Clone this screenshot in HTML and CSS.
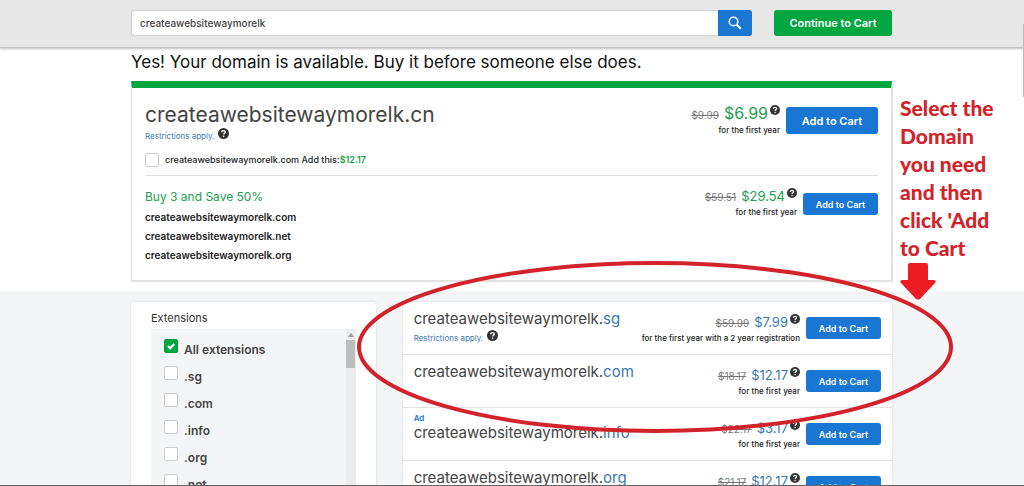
FILE: index.html
```html
<!DOCTYPE html>
<html lang="en">
<head>
    <meta charset="UTF-8">
    <meta name="viewport" content="width=device-width, initial-scale=1.0">
    <title>Domain Search</title>
    <link rel="stylesheet" href="styles.css">
</head>
<body>
    <svg class="sprite" aria-hidden="true">
        <symbol id="help" viewBox="0 0 12 12">
            <circle cx="6" cy="6" r="6" fill="#333"/>
            <path d="M4.1 4.7C4.1 3.5 4.9 2.8 6 2.8s1.9.7 1.9 1.7C7.9 5.7 6.1 5.8 6.1 7.2" fill="none" stroke="#fff" stroke-width="1.5"/>
            <circle cx="6.1" cy="9" r=".9" fill="#fff"/>
        </symbol>
    </svg>

    <header class="topbar">
        <form class="search">
            <input type="text" value="createawebsitewaymorelk" aria-label="Domain name">
            <button type="button" aria-label="Search">
                <svg width="14" height="14" viewBox="0 0 14 14" fill="none" stroke="#fff">
                    <circle cx="5.5" cy="5.5" r="4.3" stroke-width="1.5"/>
                    <path d="M8.8 8.8l4 4" stroke-width="2"/>
                </svg>
            </button>
        </form>
        <button type="button" class="continue">Continue to Cart</button>
    </header>

    <main>
        <section class="available">
            <h1>Yes! Your domain is available. Buy it before someone else does.</h1>
            <div class="card">
                <div class="offer main-offer">
                    <div class="info">
                        <h2>createawebsitewaymorelk.cn</h2>
                        <div class="restrict"><a href="#">Restrictions apply.</a><svg class="help"><use href="#help"/></svg></div>
                        <label class="addon">
                            <input type="checkbox">
                            <span>createawebsitewaymorelk.com Add this:<b>$12.17</b></span>
                        </label>
                    </div>
                    <div class="price">
                        <div class="amount"><s>$9.99</s><strong>$6.99</strong><svg class="help"><use href="#help"/></svg></div>
                        <div class="term">for the first year</div>
                    </div>
                    <button type="button" class="add big">Add to Cart</button>
                </div>
                <div class="offer bundle">
                    <div class="info">
                        <h3>Buy 3 and Save 50%</h3>
                        <ul>
                            <li>createawebsitewaymorelk.com</li>
                            <li>createawebsitewaymorelk.net</li>
                            <li>createawebsitewaymorelk.org</li>
                        </ul>
                    </div>
                    <div class="price">
                        <div class="amount"><s>$59.51</s><strong>$29.54</strong><svg class="help"><use href="#help"/></svg></div>
                        <div class="term">for the first year</div>
                    </div>
                    <button type="button" class="add">Add to Cart</button>
                </div>
            </div>
        </section>

        <section class="more">
            <aside class="filters">
                <h4>Extensions</h4>
                <div class="ext-box">
                    <div class="ext-list">
                        <label><input type="checkbox" checked><span>All extensions</span></label>
                        <label><input type="checkbox"><span>.sg</span></label>
                        <label><input type="checkbox"><span>.com</span></label>
                        <label><input type="checkbox"><span>.info</span></label>
                        <label><input type="checkbox"><span>.org</span></label>
                        <label><input type="checkbox"><span>.net</span></label>
                    </div>
                    <div class="track">
                        <svg width="6" height="4" viewBox="0 0 6 4"><path d="M3 0l3 4H0z" fill="#999"/></svg>
                        <div class="thumb"></div>
                    </div>
                </div>
            </aside>

            <div class="results">
                <div class="row">
                    <div class="info">
                        <div class="name">createawebsitewaymorelk.<em>sg</em></div>
                        <div class="restrict"><a href="#">Restrictions apply.</a><svg class="help"><use href="#help"/></svg></div>
                    </div>
                    <div class="price">
                        <div class="amount"><s>$59.99</s><strong>$7.99</strong><svg class="help"><use href="#help"/></svg></div>
                        <div class="term">for the first year with a 2 year registration</div>
                    </div>
                    <button type="button" class="add">Add to Cart</button>
                </div>
                <div class="row">
                    <div class="info">
                        <div class="name">createawebsitewaymorelk.<em>com</em></div>
                    </div>
                    <div class="price">
                        <div class="amount"><s>$18.17</s><strong>$12.17</strong><svg class="help"><use href="#help"/></svg></div>
                        <div class="term">for the first year</div>
                    </div>
                    <button type="button" class="add">Add to Cart</button>
                </div>
                <div class="row">
                    <div class="info">
                        <div class="ad">Ad</div>
                        <div class="name">createawebsitewaymorelk.<em>info</em></div>
                    </div>
                    <div class="price">
                        <div class="amount"><s>$22.17</s><strong>$3.17</strong><svg class="help"><use href="#help"/></svg></div>
                        <div class="term">for the first year</div>
                    </div>
                    <button type="button" class="add">Add to Cart</button>
                </div>
                <div class="row">
                    <div class="info">
                        <div class="name">createawebsitewaymorelk.<em>org</em></div>
                    </div>
                    <div class="price">
                        <div class="amount"><s>$21.17</s><strong>$12.17</strong><svg class="help"><use href="#help"/></svg></div>
                        <div class="term">for the first year</div>
                    </div>
                    <button type="button" class="add">Add to Cart</button>
                </div>
            </div>
        </section>
    </main>

    <!-- callout drawn over the page -->
    <svg class="ring" viewBox="0 0 600 174" fill="none">
        <ellipse cx="300" cy="87" rx="296" ry="84" stroke="#d2232a" stroke-width="4"/>
    </svg>
    <div class="note">
        <p>Select the Domain you need and then click 'Add to Cart</p>
        <svg width="36" height="38" viewBox="0 0 36 38">
            <path d="M10 1h16q2 0 2 2v15h6q3 1 1 3L20 37q-2 1-4 0L1 21q-2-2 1-3h6V3q0-2 2-2z" fill="#ed1c24"/>
        </svg>
    </div>
    <div class="page-scroll"></div>
    <div class="bottom-line"></div>
</body>
</html>
```
FILE: styles.css
```css
* {
    box-sizing: border-box;
}

body {
    font-family: Inter, "Liberation Sans", sans-serif;
    margin: 0;
    height: 100vh;
    overflow: hidden;
    position: relative;
    background: #fff;
    color: #222;
}

h1, h2, h3, h4, ul, p {
    margin: 0;
    padding: 0;
    font-weight: 400;
}

ul {
    list-style: none;
}

a {
    color: #3a78b5;
    text-decoration: none;
}

button {
    font-family: inherit;
    font-weight: 600;
    color: #fff;
    border: none;
    border-radius: 3px;
    padding: 0;
    cursor: pointer;
}

.sprite {
    display: none;
}

.help {
    width: 11px;
    height: 11px;
    flex: none;
}

/* top bar */
.topbar {
    display: flex;
    gap: 22px;
    height: 48px;
    padding: 10px 132px 11px 131px;
    background: #e7e7e7;
    border-bottom: 1px solid #c4c4c4;
    box-shadow: 0 1px 2px rgba(0, 0, 0, 0.25);
}

.search {
    flex: 1;
    display: flex;
}

.search input {
    flex: 1;
    min-width: 0;
    font-family: inherit;
    font-size: 10px;
    font-weight: 500;
    color: #444;
    padding: 0 8px;
    border: 1px solid #d0d0d0;
    border-right: none;
    border-radius: 3px 0 0 3px;
    background: #fff;
}

.search button {
    width: 34px;
    display: flex;
    align-items: center;
    justify-content: center;
    background: #1976d2;
    border-radius: 0 3px 3px 0;
}

.continue {
    width: 118px;
    font-size: 11px;
    background: #00a63f;
}

/* available domain */
.available {
    padding: 2px 132px 10px 131px;
}

h1 {
    font-size: 17px;
    line-height: 24px;
    color: #111;
    white-space: nowrap;
}

.card {
    margin-top: 7px;
    padding: 0 13px 15px;
    border: 1px solid #e0e0e0;
    border-top: 7px solid #00a63f;
    box-shadow: 1px 1px 1px rgba(0, 0, 0, 0.1);
}

.offer {
    display: flex;
    align-items: flex-start;
    gap: 6px;
}

.info {
    flex: 1;
}

.main-offer {
    padding: 14px 0 7px;
    border-bottom: 1px solid #ddd;
}

.bundle {
    padding-top: 11px;
}

h2 {
    font-size: 21px;
    line-height: 26px;
    color: #444;
}

.restrict {
    display: flex;
    gap: 4px;
    font-size: 8px;
    line-height: 16px;
}

.addon {
    display: flex;
    align-items: center;
    gap: 6px;
    margin-top: 8px;
    font-size: 9px;
    font-weight: 500;
    line-height: 16px;
}

.addon b {
    font-weight: 600;
    color: #16a34a;
}

input[type="checkbox"] {
    appearance: none;
    width: 14px;
    height: 14px;
    flex: none;
    margin: 0;
    border: 1px solid #ccc;
    border-radius: 2px;
    background: #fff;
}

input[type="checkbox"]:checked {
    border-color: #009a3a;
    background: #00a63f url("data:image/svg+xml,%3Csvg xmlns='http://www.w3.org/2000/svg' viewBox='0 0 12 12'%3E%3Cpath d='M3 6l2.2 2.2L9.2 4' fill='none' stroke='white' stroke-width='2'/%3E%3C/svg%3E") center / 12px no-repeat;
}

h3 {
    font-size: 12px;
    line-height: 20px;
    color: #20a050;
}

.bundle li {
    font-size: 10px;
    font-weight: 600;
    line-height: 19px;
}

.bundle ul {
    padding-top: 1px;
}

/* prices */
.price {
    text-align: right;
    color: #222;
}

.amount {
    display: flex;
    justify-content: flex-end;
    align-items: baseline;
    line-height: 18px;
}

.amount s {
    font-size: 10px;
    color: #777;
    margin-right: 5px;
}

.amount strong {
    font-size: 13px;
    font-weight: 400;
    color: #20a050;
    margin-right: 2px;
}

.amount .help {
    align-self: flex-start;
    width: 10px;
    height: 10px;
    margin-top: 1px;
}

.main-offer .amount strong {
    font-size: 16px;
}

.term {
    font-size: 8px;
    font-weight: 500;
    line-height: 12px;
    white-space: nowrap;
}

.price + .add {
    flex: none;
}

.add {
    width: 75px;
    height: 22px;
    font-size: 9px;
    background: #1976d2;
}

.add.big {
    width: 92px;
    height: 27px;
    font-size: 11px;
    margin-top: 5px;
}

.main-offer .price {
    padding-top: 2px;
}

.bundle .add {
    margin-top: 6px;
}

/* lower section */
.more {
    display: grid;
    grid-template-columns: minmax(0, 1fr) minmax(0, 2fr);
    gap: 27px;
    padding: 11px 132px 0 131px;
    background: #f4f5f7;
}

.filters {
    padding: 6px 20px 0;
    background: #fff;
    border-radius: 4px;
    box-shadow: 0 0 3px rgba(0, 0, 0, 0.12);
}

h4 {
    font-size: 11px;
    line-height: 21px;
    color: #333;
}

.ext-box {
    display: flex;
    background: #f4f5f7;
}

.ext-list {
    flex: 1;
    padding: 7px 13px 0;
}

.ext-list label {
    display: flex;
    gap: 6px;
    height: 27px;
    padding-top: 3px;
    font-size: 12px;
    font-weight: 600;
    line-height: 22px;
    color: #444;
}

.track {
    width: 10px;
    display: flex;
    flex-direction: column;
    align-items: center;
    gap: 3px;
    padding-top: 4px;
    background: #ededed;
}

.thumb {
    width: 9px;
    height: 28px;
    background: #bdbdbd;
}

.results {
    background: #fff;
    border-radius: 4px;
    box-shadow: 0 0 3px rgba(0, 0, 0, 0.12);
}

.row {
    display: flex;
    align-items: center;
    gap: 6px;
    height: 53px;
    padding: 0 11px;
    border-bottom: 1px solid #e2e2e2;
}

.row .info {
    align-self: flex-start;
    padding-top: 6px;
}

.name {
    font-size: 15px;
    line-height: 22px;
    color: #444;
}

.name em {
    font-style: normal;
    color: #3a78b5;
}

.row strong {
    color: #3a78b5;
}

.ad {
    font-size: 8px;
    font-weight: 600;
    line-height: 8px;
    color: #1976d2;
}

/* callout */
.ring {
    position: absolute;
    left: 355px;
    top: 260px;
    width: 600px;
    height: 174px;
    pointer-events: none;
}

.note {
    position: absolute;
    left: 900px;
    top: 94px;
    width: 112px;
    font-family: Lato, sans-serif;
    color: #d2232a;
}

.note p {
    font-size: 21px;
    font-weight: 900;
    line-height: 28px;
}

.note svg {
    display: block;
}

.page-scroll {
    position: absolute;
    right: 0;
    top: 24px;
    width: 1px;
    height: 73px;
    background: #bbb;
}

.bottom-line {
    position: absolute;
    left: 0;
    right: 0;
    bottom: 0;
    height: 1px;
    background: #666;
}
```
